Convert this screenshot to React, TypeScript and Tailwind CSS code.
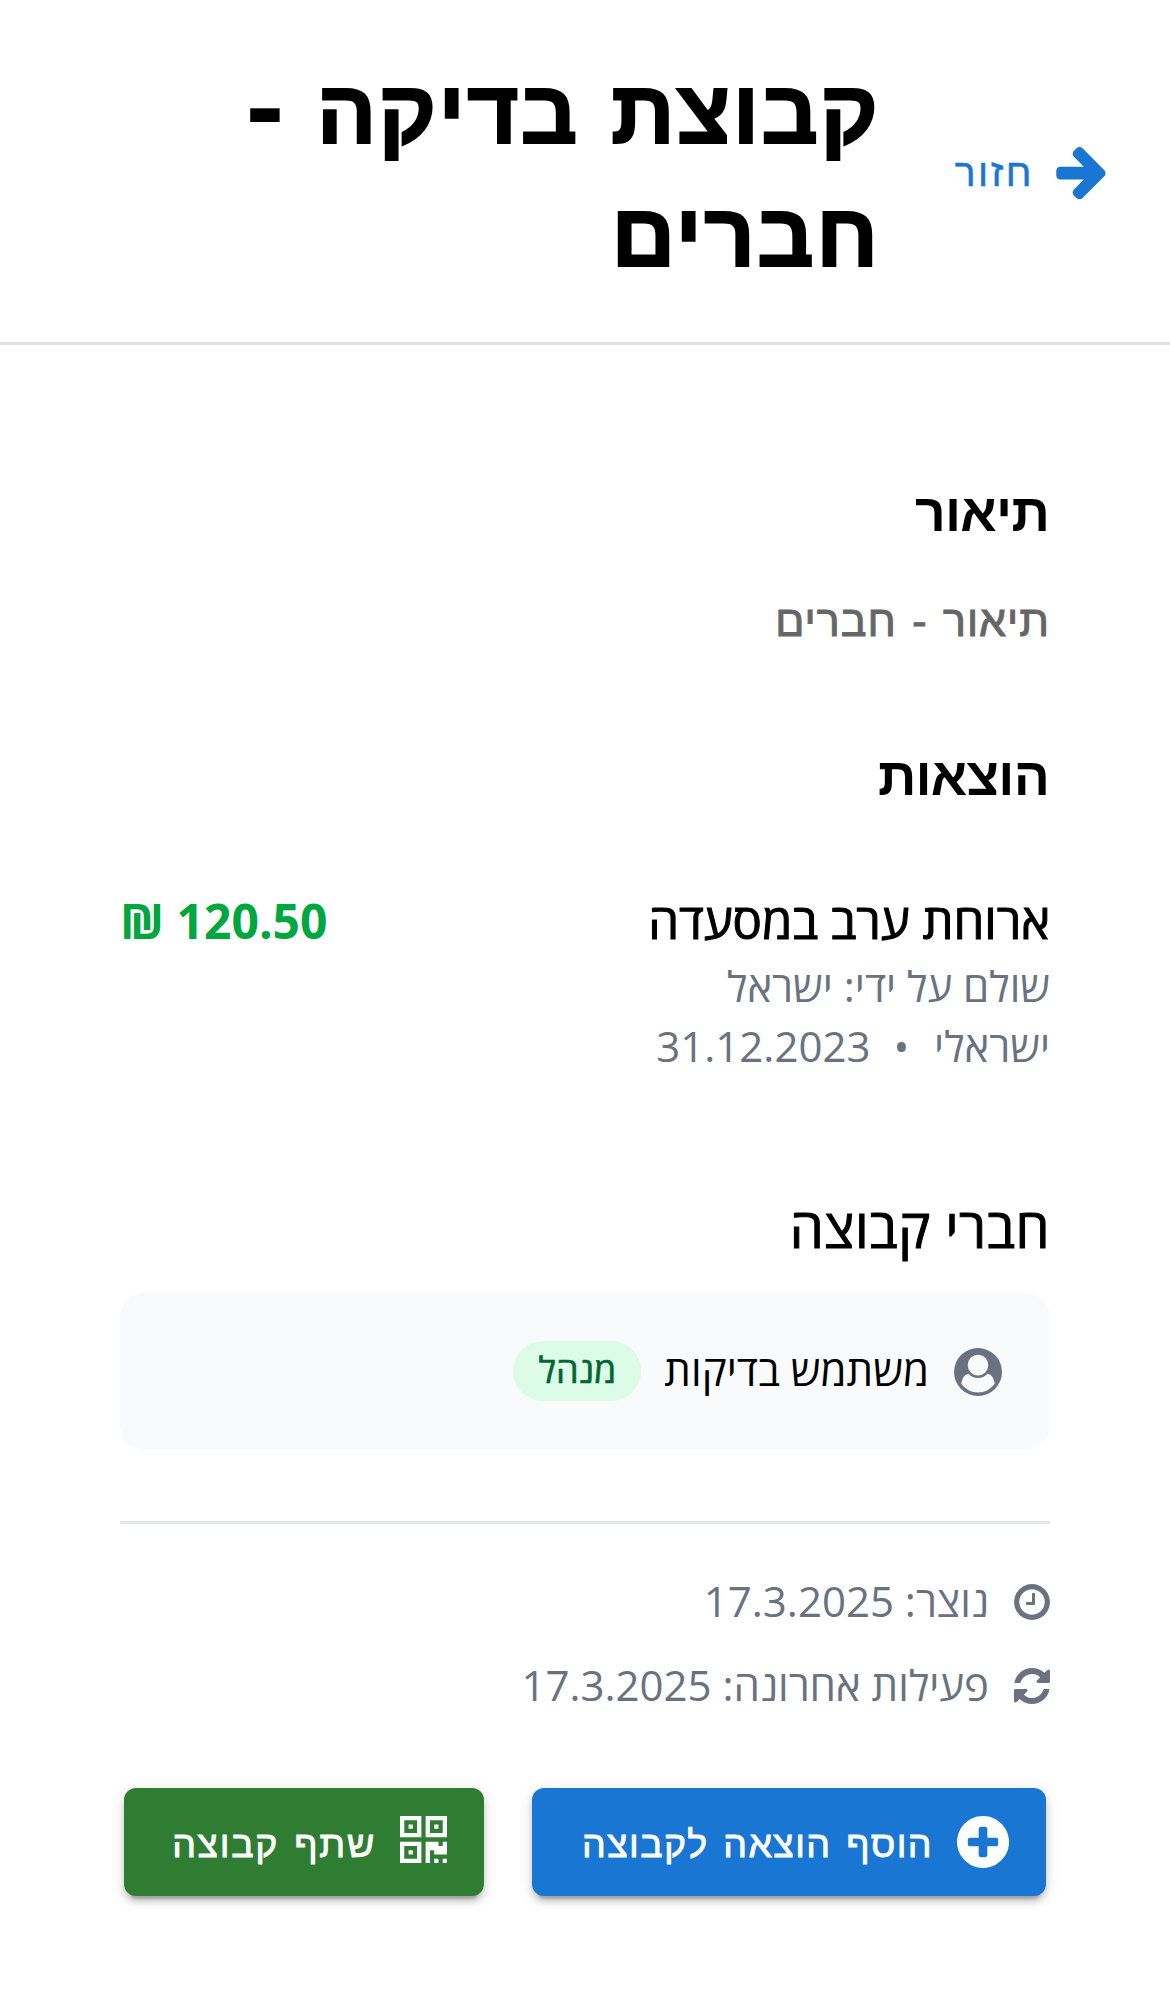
import type { ReactNode } from 'react';

const ARROW =
  'M1600 960q0 54-37 91l-651 651q-39 37-91 37-51 0-90-37l-75-75q-38-38-38-91t38-91l293-293h-704q-52 0-84.5-37.5t-32.5-90.5v-128q0-53 32.5-90.5t84.5-37.5h704l-293-294q-38-36-38-90t38-90l75-75q38-38 90-38 53 0 91 38l651 651q37 35 37 90z';
const PLUS =
  'M1344 960v-128q0-26-19-45t-45-19h-256v-256q0-26-19-45t-45-19h-128q-26 0-45 19t-19 45v256h-256q-26 0-45 19t-19 45v128q0 26 19 45t45 19h256v256q0 26 19 45t45 19h128q26 0 45-19t19-45v-256h256q26 0 45-19t19-45zm320-64q0 209-103 385.5t-279.5 279.5-385.5 103-385.5-103-279.5-279.5-103-385.5 103-385.5 279.5-279.5 385.5-103 385.5 103 279.5 279.5 103 385.5z';
const CLOCK =
  'M1024 544v448q0 14-9 23t-23 9h-320q-14 0-23-9t-9-23v-64q0-14 9-23t23-9h224v-352q0-14 9-23t23-9h64q14 0 23 9t9 23zm416 352q0-148-73-273t-198-198-273-73-273 73-198 198-73 273 73 273 198 198 273 73 273-73 198-198 73-273zm224 0q0 209-103 385.5t-279.5 279.5-385.5 103-385.5-103-279.5-279.5-103-385.5 103-385.5 279.5-279.5 385.5-103 385.5 103 279.5 279.5 103 385.5z';
const REFRESH =
  'M1639 1056q0 5-1 7-64 268-268 434.5t-478 166.5q-146 0-282.5-55t-243.5-157l-129 129q-19 19-45 19t-45-19-19-45v-448q0-26 19-45t45-19h448q26 0 45 19t19 45-19 45l-137 137q71 66 161 102t187 36q134 0 250-65t186-179q11-17 53-117 8-23 30-23h192q13 0 22.5 9.5t9.5 22.5zm25-800v448q0 26-19 45t-45 19h-448q-26 0-45-19t-19-45 19-45l138-138q-148-137-349-137-134 0-250 65t-186 179q-11 17-53 117-8 23-30 23h-199q-13 0-22.5-9.5t-9.5-22.5v-7q65-268 270-434.5t480-166.5q146 0 284 55.5t245 156.5l130-129q19-19 45-19t45 19 19 45z';
const USER =
  'M1523 1339q-22-155-87.5-257.5t-184.5-118.5q-67 74-159.5 115.5t-195.5 41.5-195.5-41.5-159.5-115.5q-119 16-184.5 118.5t-87.5 257.5q106 150 271 237.5t356 87.5 356-87.5 271-237.5zm-243-699q0-159-112.5-271.5t-271.5-112.5-271.5 112.5-112.5 271.5 112.5 271.5 271.5 112.5 271.5-112.5 112.5-271.5zm512 256q0 182-71 347.5t-190.5 286-285.5 191.5-349 71q-182 0-348-71t-286-191-191-286-71-348 71-348 191-286 286-191 348-71 348 71 286 191 191 286 71 348z';
const QR =
  'M0 0h5v5h-5zM1 1v3h3v-3zM2 2h1v1h-1zM6 0h5v5h-5zM7 1v3h3v-3zM8 2h1v1h-1zM0 6h5v5h-5zM1 7v3h3v-3zM2 8h1v1h-1zM6 6h3v1h1v-1h1v3h-3v-1h-1v3h-1zM8 10h1v1h-1zM10 10h1v1h-1z';

function Icon({ d, box = '128 128 1536 1536', className }: { d: string; box?: string; className: string }) {
  return (
    <svg viewBox={box} className={`shrink-0 fill-current ${className}`} aria-hidden="true">
      <path d={d} fillRule="evenodd" />
    </svg>
  );
}

function SectionTitle({ children }: { children: ReactNode }) {
  return (
    <h2 className='pr-px font-["Liberation_Sans",sans-serif] text-[53.5px] leading-[97px] -mb-px font-bold tracking-[-0.8px]'>
      {children}
    </h2>
  );
}

function ActionButton({ className, icon, children }: { className: string; icon: ReactNode; children: ReactNode }) {
  return (
    <button
      className={`flex h-[108px] items-center gap-6 rounded-xl pr-[37px] font-["Liberation_Sans",sans-serif] text-[37.5px] whitespace-nowrap text-white [-webkit-text-stroke:0.8px_currentColor] shadow-[0_9px_3px_-6px_rgba(0,0,0,0.2),0_6px_6px_0_rgba(0,0,0,0.14),0_3px_15px_0_rgba(0,0,0,0.12)] ${className}`}
    >
      {icon}
      <span className="pt-1">{children}</span>
    </button>
  );
}

function MetaRow({ icon, children }: { icon: string; children: ReactNode }) {
  return (
    <div className="flex h-[60px] items-center gap-[25px]">
      <Icon d={icon} className="size-9" />
      <span className="pb-0.5">{children}</span>
    </div>
  );
}

export default function App() {
  return (
    <div dir="rtl" className='min-h-[1992px] w-full bg-white font-["Open_Sans",sans-serif] text-black'>
      <header className="flex h-[345px] items-center gap-[35px] border-b-[3px] border-[#e0e0e0] pt-[3px] pr-[58px]">
        <button className='flex w-[197px] shrink-0 items-center gap-[18px] font-["Liberation_Sans",sans-serif] text-[39px] tracking-[2.5px] text-[#1976d2] [-webkit-text-stroke:0.5px_currentColor]'>
          <Icon d={ARROW} box="0 0 1792 1792" className="mb-1 size-[60px]" />
          <span className="pt-0.5">חזור</span>
        </button>
        <h1 className='w-[660px] pt-[3px] font-["Liberation_Sans",sans-serif] text-[89px] leading-[123px] font-bold tracking-[1.8px] [word-spacing:5px] [-webkit-text-stroke:2px_currentColor]'>
          קבוצת בדיקה <span className='font-["DejaVu_Sans",sans-serif] text-[96px] leading-none tracking-normal [-webkit-text-stroke:0]'>-</span> חברים
        </h1>
      </header>

      <main className="px-[120px] pt-[119px]">
        <section>
          <SectionTitle>תיאור</SectionTitle>
          <p className='mt-[25px] font-["Liberation_Sans",sans-serif] text-[43px] leading-[72px] tracking-[1px] text-[#666] [word-spacing:2.5px] [-webkit-text-stroke:1px_currentColor]'>
            תיאור - חברים
          </p>
        </section>

        <section className="mt-[71px]">
          <SectionTitle>הוצאות</SectionTitle>
          <div className="mt-[60px] flex items-start justify-between">
            <div className="w-[430px]">
              <h3 className="text-[49px] leading-[72px] [-webkit-text-stroke:1px_currentColor]">ארוחת ערב במסעדה</h3>
              <p className="text-[42px] leading-[60px] text-[#6a7282]">
                שולם על ידי: ישראל ישראלי <span className="mr-3.5 ml-3">•</span> 31.12.2023
              </p>
            </div>
            <span className="pt-px text-[48px] leading-[72px] font-bold whitespace-nowrap text-[#00a63e]">120.50 ₪</span>
          </div>
        </section>

        <section className="mt-[109px]">
          <h2 className="text-[54px] leading-[84px] tracking-[0.6px] [-webkit-text-stroke:1px_currentColor]">חברי קבוצה</h2>
          <div className="mt-6 flex h-[156px] items-center gap-6 rounded-3xl bg-[#f9fafb] px-12">
            <Icon d={USER} box="0 0 1792 1792" className="mt-0.5 size-12 text-[#6a7282]" />
            <span className="pr-px pb-0.5 text-[42px] leading-[60px]">משתמש בדיקות</span>
            <span className="-mr-px h-[60px] rounded-full bg-[#dcfce7] px-[25px] text-[36px] leading-[57px] text-[#016630] [-webkit-text-stroke:0.6px_currentColor]">
              מנהל
            </span>
          </div>
        </section>

        <section className="mt-[72px] flex flex-col gap-6 border-t-[3px] border-[#e5e7eb] pt-12 text-[42px] leading-[60px] text-[#6a7282]">
          <MetaRow icon={CLOCK}>נוצר: 17.3.2025</MetaRow>
          <MetaRow icon={REFRESH}>פעילות אחרונה: 17.3.2025</MetaRow>
        </section>

        <div className="mt-[72px] flex gap-12 px-1">
          <ActionButton
            className="w-[514px] bg-[#1976d2] tracking-[1.4px] [word-spacing:3px]"
            icon={<Icon d={PLUS} className="size-[52px]" />}
          >
            הוסף הוצאה לקבוצה
          </ActionButton>
          <ActionButton
            className="w-[360px] bg-[#2e7d32] tracking-[1.7px] [word-spacing:3px]"
            icon={<Icon d={QR} box="0 0 11 11" className="-mt-[5px] size-[47px]" />}
          >
            שתף קבוצה
          </ActionButton>
        </div>
      </main>
    </div>
  );
}
